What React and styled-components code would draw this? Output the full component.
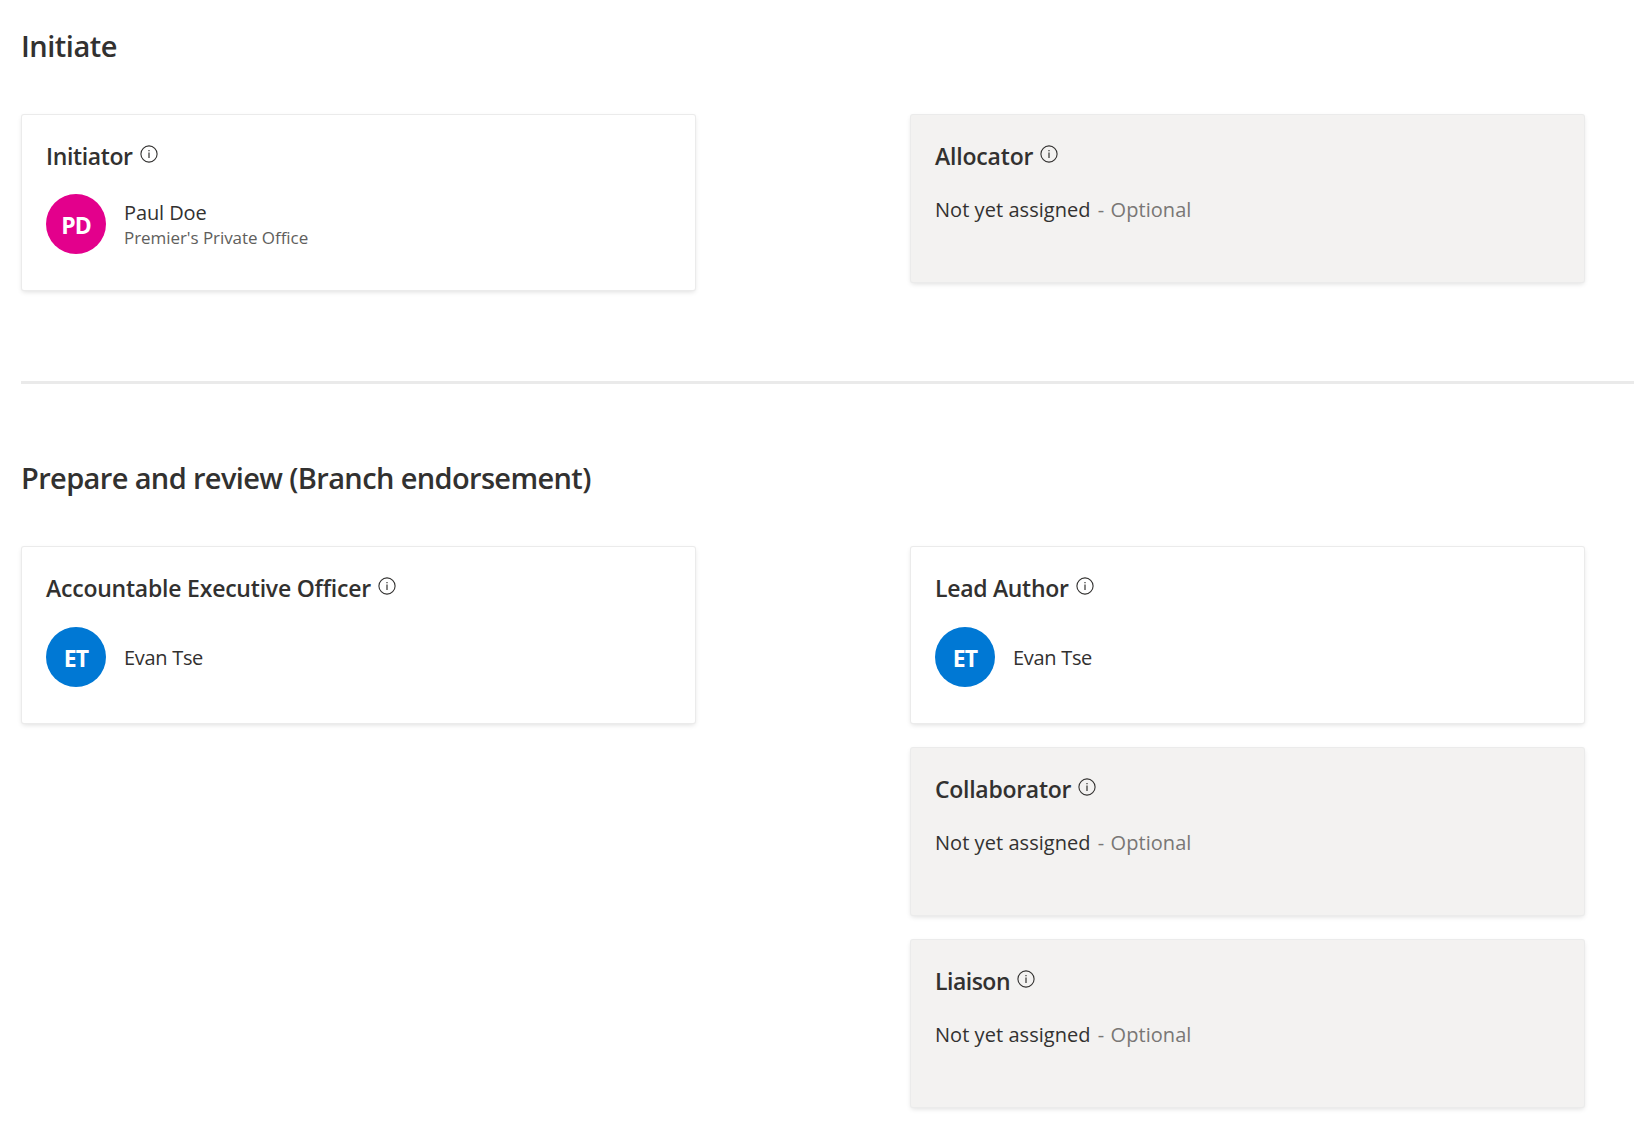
import React from "react";
import styled, { createGlobalStyle } from "styled-components";

const GlobalStyle = createGlobalStyle`
  * { box-sizing: border-box; }
  body {
    margin: 0;
    background: #fff;
    color: #323130;
    font-family: "Segoe UI", "Open Sans", "Noto Sans", sans-serif;
    overflow: hidden;
  }
`;

const Page = styled.main`
  width: 1634px;
  height: 1127px;
  padding: 26px 0 0 22px;
  overflow: hidden;
`;

const SectionTitle = styled.h2`
  margin: 0 0 49px -1px;
  height: 40px;
  line-height: 40px;
  font-size: 29px;
  font-weight: 600;
  white-space: nowrap;
  letter-spacing: ${(p) => p.$spacing || "0"};
`;

const Columns = styled.div`
  display: grid;
  grid-template-columns: 673px 673px;
  column-gap: 216px;
  align-items: start;
`;

const Column = styled.div`
  display: flex;
  flex-direction: column;
  gap: 25px;
`;

const Divider = styled.hr`
  height: 3px;
  margin: 91px 0 74px -1px;
  border: 0;
  background: #eaeaea;
`;

const Card = styled.article`
  height: ${(p) => p.$height}px;
  padding: 24px;
  border-radius: 2px;
  background: ${(p) => (p.$empty ? "#f3f2f1" : "#fff")};
  box-shadow: 0 0 0 1px #ebebeb, 0 2px 5px rgba(0, 0, 0, 0.13);
`;

const CardHeader = styled.header`
  display: flex;
  align-items: flex-start;
  gap: 7px;
  height: 36px;
`;

const Role = styled.h3`
  margin: 0;
  line-height: 35px;
  font-size: 23px;
  font-weight: 600;
  white-space: nowrap;
  letter-spacing: ${(p) => p.$spacing || "0"};
`;

const InfoSvg = styled.svg`
  flex: none;
  margin-top: 6px;
`;

const Person = styled.div`
  display: flex;
  align-items: center;
  gap: 18px;
  margin-top: ${(p) => (p.$compact ? 20 : 19)}px;
`;

const Avatar = styled.div`
  display: flex;
  align-items: center;
  justify-content: center;
  width: 60px;
  height: 60px;
  padding-top: 2px;
  border-radius: 50%;
  background: ${(p) => p.$color};
  color: #fff;
  font-size: 23px;
  font-weight: 700;
  letter-spacing: -0.9px;
`;

const Details = styled.div`
  padding-top: 2px;
`;

const Name = styled.div`
  line-height: 26px;
  font-size: 20px;
  white-space: nowrap;
  letter-spacing: ${(p) => p.$spacing || "0"};
`;

const Office = styled.div`
  line-height: 24px;
  font-size: 17px;
  color: #605e5c;
  white-space: nowrap;
  letter-spacing: -0.06px;
`;

const Unassigned = styled.p`
  margin: 21px 0 0;
  line-height: 28px;
  font-size: 20px;
  white-space: nowrap;
  letter-spacing: 0.05px;
`;

const Optional = styled.span`
  margin-left: 2px;
  color: #797775;
  word-spacing: 1px;
`;

function InfoIcon() {
  return (
    <InfoSvg width="18" height="18" viewBox="0 0 18 18" fill="none">
      <circle cx="9" cy="9" r="8.1" stroke="#323130" strokeWidth="1.1" />
      <path d="M9 7.5V13" stroke="#323130" strokeWidth="1.2" />
      <path d="M9 5V6.3" stroke="#323130" strokeWidth="1.2" />
    </InfoSvg>
  );
}

function RoleCard({ role, spacing, person, height }) {
  return (
    <Card $height={height} $empty={!person}>
      <CardHeader>
        <Role $spacing={spacing}>{role}</Role>
        <InfoIcon />
      </CardHeader>
      {person ? (
        <Person $compact={!person.office}>
          <Avatar $color={person.color}>{person.initials}</Avatar>
          <Details>
            <Name $spacing={person.spacing}>{person.name}</Name>
            {person.office && <Office>{person.office}</Office>}
          </Details>
        </Person>
      ) : (
        <Unassigned>
          Not yet assigned <Optional>- Optional</Optional>
        </Unassigned>
      )}
    </Card>
  );
}

const paul = {
  initials: "PD",
  name: "Paul Doe",
  office: "Premier's Private Office",
  color: "#e3008c",
  spacing: "-0.1px",
};
const evan = { initials: "ET", name: "Evan Tse", color: "#0078d4", spacing: "-0.3px" };

export default function App() {
  return (
    <>
      <GlobalStyle />
      <Page>
        <section>
          <SectionTitle $spacing="-0.5px">Initiate</SectionTitle>
          <Columns>
            <Column>
              <RoleCard role="Initiator" spacing="-0.37px" person={paul} height={175} />
            </Column>
            <Column>
              <RoleCard role="Allocator" spacing="-0.18px" height={167} />
            </Column>
          </Columns>
        </section>
        <Divider />
        <section>
          <SectionTitle $spacing="-0.63px">Prepare and review (Branch endorsement)</SectionTitle>
          <Columns>
            <Column>
              <RoleCard
                role="Accountable Executive Officer"
                spacing="-0.22px"
                person={evan}
                height={176}
              />
            </Column>
            <Column>
              <RoleCard role="Lead Author" spacing="-0.3px" person={evan} height={176} />
              <RoleCard role="Collaborator" spacing="-0.28px" height={167} />
              <RoleCard role="Liaison" spacing="-0.5px" height={167} />
            </Column>
          </Columns>
        </section>
      </Page>
    </>
  );
}
